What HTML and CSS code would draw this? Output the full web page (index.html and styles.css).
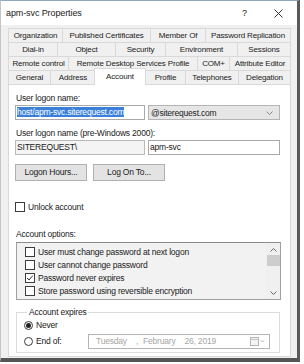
FILE: index.html
```html
<!DOCTYPE html>
<html lang="en">
<head>
  <meta charset="UTF-8">
  <title>apm-svc Properties</title>
  <link rel="stylesheet" href="styles.css">
</head>
<body>
  <div class="window">
    <!-- Title bar -->
    <div class="title-bar">
      <span class="title">apm-svc Properties</span>
      <span class="title-btn help">?</span>
      <span class="title-btn close">
        <svg width="9" height="9" viewBox="0 0 9 9"><path d="M0.5 0.5 L8.5 8.5 M8.5 0.5 L0.5 8.5" stroke="#333" stroke-width="1" fill="none"/></svg>
      </span>
    </div>

    <!-- Tabs -->
    <div class="tabs">
      <div class="tab-row">
        <div class="tab" style="width:54px">Organization</div>
        <div class="tab" style="width:88px">Published Certificates</div>
        <div class="tab" style="width:55px">Member Of</div>
        <div class="tab" style="width:86px">Password Replication</div>
      </div>
      <div class="tab-row">
        <div class="tab" style="width:49px">Dial-in</div>
        <div class="tab" style="width:58px">Object</div>
        <div class="tab" style="width:50px">Security</div>
        <div class="tab" style="width:72px">Environment</div>
        <div class="tab" style="width:54px">Sessions</div>
      </div>
      <div class="tab-row">
        <div class="tab" style="width:60px">Remote control</div>
        <div class="tab" style="width:129px">Remote Desktop Services Profile</div>
        <div class="tab" style="width:32px">COM+</div>
        <div class="tab" style="width:62px">Attribute Editor</div>
      </div>
      <div class="tab-row">
        <div class="tab" style="width:42px">General</div>
        <div class="tab" style="width:45px">Address</div>
        <div class="tab active" style="width:52px">Account</div>
        <div class="tab" style="width:40px">Profile</div>
        <div class="tab" style="width:53px">Telephones</div>
        <div class="tab" style="width:53px">Delegation</div>
      </div>
    </div>

    <!-- Account page -->
    <div class="panel">
      <div class="label">User logon name:</div>
      <div class="field-row">
        <div class="input wide"><span class="selected-text">host/apm-svc.siterequest.com</span></div>
        <div class="select">
          <span>@siterequest.com</span>
          <svg class="chevron" width="7" height="4" viewBox="0 0 7 4"><polyline points="0.5,0.5 3.5,3.5 6.5,0.5" fill="none" stroke="#888" stroke-width="1"/></svg>
        </div>
      </div>

      <div class="label second">User logon name (pre-Windows 2000):</div>
      <div class="field-row">
        <div class="input wide readonly">SITEREQUEST\</div>
        <div class="input narrow">apm-svc</div>
      </div>

      <div class="button-row">
        <div class="button">Logon Hours...</div>
        <div class="button">Log On To...</div>
      </div>

      <div class="check-line unlock">
        <span class="checkbox"></span>Unlock account
      </div>

      <div class="label options-label">Account options:</div>
      <div class="listbox">
        <div class="list-items">
          <div class="check-line"><span class="checkbox"></span>User must change password at next logon</div>
          <div class="check-line"><span class="checkbox"></span>User cannot change password</div>
          <div class="check-line"><span class="checkbox checked">
            <svg width="8" height="8" viewBox="0 0 8 8"><polyline points="1.2,4 3,6 6.8,1.6" fill="none" stroke="#333" stroke-width="1"/></svg>
          </span>Password never expires</div>
          <div class="check-line"><span class="checkbox"></span>Store password using reversible encryption</div>
        </div>
        <div class="scrollbar">
          <svg width="7" height="4" viewBox="0 0 7 4"><polyline points="0.5,3.5 3.5,0.5 6.5,3.5" fill="none" stroke="#666" stroke-width="1"/></svg>
          <div class="thumb"></div>
          <div class="track"></div>
          <svg width="7" height="4" viewBox="0 0 7 4"><polyline points="0.5,0.5 3.5,3.5 6.5,0.5" fill="none" stroke="#666" stroke-width="1"/></svg>
        </div>
      </div>

      <fieldset class="expires">
        <legend>Account expires</legend>
        <div class="radio-line"><span class="radio on"></span>Never</div>
        <div class="radio-line end-of">
          <span class="radio"></span><span class="radio-text">End of:</span>
          <div class="datepicker">
            <span class="date-text">Tuesday</span>
            <span class="date-text comma">,</span>
            <span class="date-text">February</span>
            <span class="date-text day">26, 2019</span>
            <svg class="calendar" width="15" height="9" viewBox="0 0 15 9">
              <rect x="0.5" y="0.5" width="8" height="8" fill="#f4f4f4" stroke="#b4b4b4"/>
              <line x1="0.5" y1="2.5" x2="8.5" y2="2.5" stroke="#c4c4c4"/>
              <polyline points="11,3.5 12.5,5 14,3.5" fill="none" stroke="#aaa" stroke-width="1"/>
            </svg>
          </div>
        </div>
      </fieldset>
    </div>
  </div>
</body>
</html>
```

FILE: styles.css
```css
/* Windows dialog colours */
:root {
  --face: #f0f0f0;
  --tab-border: #d9d9d9;
  --field-border: #a9a9a9;
  --text: #1a1a1a;
  --dim: #a6a6a6;
  --select-blue: #3a7fd8;
}

body {
  margin: 0;
  background: #ffffff;
  font-family: 'Liberation Sans', Arial, sans-serif;
  font-size: 8.5px;
  letter-spacing: -0.2px;
  color: var(--text);
}

/* Dialog frame */
.window {
  width: 300px;
  height: 362px;
  box-sizing: border-box;
  background: var(--face);
  border-top: 1px solid #8ea6bf;
  border-left: 1px solid #c4c4c4;
  border-right: 3px solid #5a5a5a;
  border-bottom: 4px solid #555555;
}

.title-bar {
  height: 24px;
  background: #ffffff;
  display: flex;
  align-items: center;
  padding-left: 5px;
}

.title {
  font-size: 9px;
  letter-spacing: -0.1px;
  flex: 1;
}

.title-btn {
  width: 33px;
  text-align: center;
  font-size: 9px;
}

.help {
  margin-right: 1px;
}

.close {
  display: flex;
  justify-content: center;
  margin-right: 2px;
}

/* Tab strip */
.tabs {
  margin: 3px 0 0 7px;
  width: 283px;
}

.tab-row {
  display: flex;
  height: 14px;
}

.tab {
  box-sizing: border-box;
  border-top: 1px solid var(--tab-border);
  border-left: 1px solid var(--tab-border);
  font-size: 8px;
  letter-spacing: -0.15px;
  line-height: 13px;
  text-align: center;
  white-space: nowrap;
  color: #222;
}

.tab:last-child {
  border-right: 1px solid var(--tab-border);
}

.tab.active {
  background: #ffffff;
  margin: -2px -1px -1px;
  line-height: 15px;
  border-right: 1px solid var(--tab-border);
  position: relative;
  z-index: 1;
}

/* Tab page */
.panel {
  margin-left: 7px;
  width: 283px;
  height: 273px;
  box-sizing: border-box;
  background: #ffffff;
  border: 1px solid var(--tab-border);
  padding: 7px 0 0 6px;
}

.label {
  height: 12px;
  line-height: 12px;
  padding-left: 1px;
}

.label.second {
  margin-top: 7px;
}

.field-row {
  display: flex;
  gap: 3px;
  margin-top: 1px;
}

.input {
  box-sizing: border-box;
  height: 15px;
  border: 1px solid var(--field-border);
  background: #ffffff;
  line-height: 13px;
  padding-left: 1px;
  white-space: nowrap;
}

.input.wide {
  width: 130px;
}

.input.narrow {
  width: 132px;
}

.input.readonly {
  background: #f4f4f4;
  border-color: #b9b9b9;
}

.selected-text {
  background: var(--select-blue);
  color: #ffffff;
}

.select {
  box-sizing: border-box;
  width: 132px;
  height: 15px;
  border: 1px solid #b4b4b4;
  background: #e6e6e6;
  display: flex;
  align-items: center;
  justify-content: space-between;
  padding: 0 6px 0 2px;
}

.button-row {
  display: flex;
  gap: 6px;
  margin-top: 9px;
}

.button {
  box-sizing: border-box;
  width: 72px;
  height: 17px;
  border: 1px solid #b0b0b0;
  background: #e3e3e3;
  line-height: 15px;
  text-align: center;
}

/* Check boxes */
.check-line {
  display: flex;
  align-items: center;
  height: 13px;
  white-space: nowrap;
}

.check-line.unlock {
  margin-top: 19px;
}

.checkbox {
  width: 8px;
  height: 8px;
  border: 1px solid #3c3c3c;
  background: #ffffff;
  margin-right: 3px;
  flex: none;
  display: flex;
}

.options-label {
  margin-top: 15px;
}

.listbox {
  display: flex;
  width: 265px;
  height: 58px;
  box-sizing: border-box;
  margin: 2px 0 0 1px;
  border: 1px solid #a0a0a0;
  border-top-color: #8c8c8c;
  background: #f2f2f2;
  overflow: hidden;
}

.list-items {
  flex: 1;
  padding: 2px 0 0 8px;
  overflow: hidden;
}

.scrollbar {
  width: 14px;
  display: flex;
  flex-direction: column;
  align-items: center;
  padding: 5px 0 4px;
  background: #f0f0f0;
}

.thumb {
  width: 13px;
  height: 11px;
  margin-top: 3px;
  background: #cdcdcd;
}

.track {
  flex: 1;
}

/* Account expires group */
.expires {
  width: 264px;
  height: 46px;
  box-sizing: border-box;
  margin: 7px 0 0 1px;
  padding: 1px 0 0 7px;
  border: 1px solid #dcdcdc;
}

.expires legend {
  padding: 0 2px;
  margin-left: 3px;
  line-height: 10px;
}

.radio-line {
  display: flex;
  align-items: center;
  height: 14px;
}

.radio {
  width: 9px;
  height: 9px;
  box-sizing: border-box;
  border: 1px solid #3c3c3c;
  border-radius: 50%;
  margin-right: 3px;
  background: #ffffff;
  display: flex;
  align-items: center;
  justify-content: center;
  flex: none;
}

.radio.on::after {
  content: '';
  width: 5px;
  height: 5px;
  border-radius: 50%;
  background: #222;
}

.radio-line.end-of {
  margin-top: 2px;
}

.radio-text {
  width: 52px;
}

.datepicker {
  box-sizing: border-box;
  width: 182px;
  height: 15px;
  border: 1px solid #b4b4b4;
  background: #ffffff;
  display: flex;
  align-items: center;
  padding-left: 7px;
  color: var(--dim);
}

.date-text {
  margin-right: 9px;
}

.date-text.comma {
  margin-right: 5px;
}

.date-text.day {
  margin-right: 0;
  flex: 1;
}

.calendar {
  margin-right: 4px;
}
```
